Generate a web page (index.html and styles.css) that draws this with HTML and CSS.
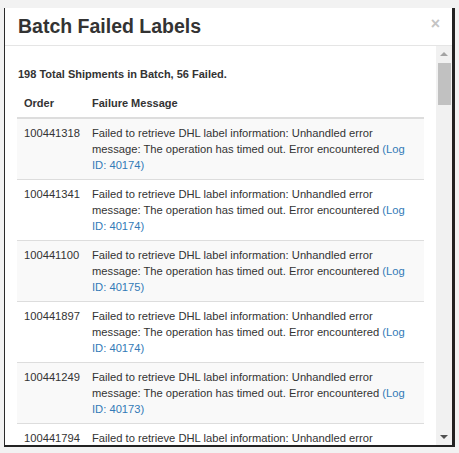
FILE: index.html
```html
<!DOCTYPE html>
<html lang="en">
<head>
<meta charset="utf-8">
<title>Batch Failed Labels</title>
<link rel="stylesheet" href="styles.css">
</head>
<body>
<div class="modal">
  <div class="modal-header">
    <h3 class="modal-title">Batch Failed Labels</h3>
    <span class="close">&times;</span>
  </div>
  <div class="modal-main">
    <div class="modal-body">
      <p class="summary">198 Total Shipments in Batch, 56 Failed.</p>
      <table class="table">
        <thead>
          <tr><th class="col-order">Order</th><th>Failure Message</th></tr>
        </thead>
        <tbody>
          <tr><td>100441318</td><td>Failed to retrieve DHL label information: Unhandled error message: The operation has timed out. Error encountered <a class="log">(Log ID: 40174)</a></td></tr>
          <tr><td>100441341</td><td>Failed to retrieve DHL label information: Unhandled error message: The operation has timed out. Error encountered <a class="log">(Log ID: 40174)</a></td></tr>
          <tr><td>100441100</td><td>Failed to retrieve DHL label information: Unhandled error message: The operation has timed out. Error encountered <a class="log">(Log ID: 40175)</a></td></tr>
          <tr><td>100441897</td><td>Failed to retrieve DHL label information: Unhandled error message: The operation has timed out. Error encountered <a class="log">(Log ID: 40174)</a></td></tr>
          <tr><td>100441249</td><td>Failed to retrieve DHL label information: Unhandled error message: The operation has timed out. Error encountered <a class="log">(Log ID: 40173)</a></td></tr>
          <tr><td>100441794</td><td>Failed to retrieve DHL label information: Unhandled error message: The operation has timed out. Error encountered <a class="log">(Log ID: 40174)</a></td></tr>
        </tbody>
      </table>
    </div>
    <div class="scrollbar">
      <div class="sb-btn"><span class="arrow-up"></span></div>
      <div class="sb-thumb"></div>
      <div class="sb-track"></div>
      <div class="sb-btn"><span class="arrow-down"></span></div>
    </div>
  </div>
</div>
</body>
</html>
```

FILE: styles.css
```css
html, body {
  margin: 0;
  padding: 0;
}
body {
  background: #f2f2f2;
  font-family: "Liberation Sans", Arial, Helvetica, sans-serif;
  color: #333;
  font-size: 11px;
  line-height: 16px;
  padding: 8px 4px 0 4px;
  height: 453px;
  box-sizing: border-box;
  overflow: hidden;
}
.modal {
  background: #fff;
  border-left: 1px solid #2a2a2a;
  border-right: 3px solid #222;
  border-bottom: 2px solid #222;
  height: 439px;
  box-sizing: border-box;
  display: flex;
  flex-direction: column;
}
.modal-header {
  height: 38px;
  box-sizing: border-box;
  border-bottom: 1px solid #e5e5e5;
  padding: 7px 12px 0 13px;
  display: flex;
  justify-content: space-between;
  align-items: flex-start;
  flex: none;
}
.modal-title {
  margin: 0;
  font-size: 19.5px;
  line-height: 22px;
  font-weight: bold;
  color: #333;
}
.close {
  font-size: 16px;
  font-weight: bold;
  line-height: 16px;
  color: #c4c4c4;
  margin-top: 1px;
}
.modal-main {
  flex: 1;
  display: flex;
  min-height: 0;
}
.modal-body {
  flex: 1;
  overflow: hidden;
  padding: 0 12px;
}
.summary {
  margin: 20px 0 5px 1px;
  font-weight: bold;
}
.table {
  width: 100%;
  border-collapse: collapse;
  border-spacing: 0;
}
.table th {
  text-align: left;
  font-weight: bold;
  padding: 8px 7px 6px;
  border-bottom: 2px solid #ddd;
  vertical-align: bottom;
}
.table th.col-order {
  width: 56px;
  padding-right: 5px;
}
.table td {
  padding: 6px 7px;
  vertical-align: top;
  border-top: 1px solid #ddd;
  font-size: 11.2px;
}
.table td:first-child {
  padding-right: 5px;
}
.table tbody tr:first-child td {
  border-top: 0;
}
.table tbody tr:nth-child(odd) td {
  background: #f9f9f9;
}
.log {
  color: #337ab7;
  text-decoration: none;
}
.scrollbar {
  width: 16px;
  flex: none;
  background: #f1f1f1;
  display: flex;
  flex-direction: column;
}
.sb-btn {
  height: 16px;
  flex: none;
  display: flex;
  align-items: center;
  justify-content: center;
}
.arrow-up {
  width: 0;
  height: 0;
  border-left: 4px solid transparent;
  border-right: 4px solid transparent;
  border-bottom: 4px solid #a3a3a3;
}
.arrow-down {
  width: 0;
  height: 0;
  border-left: 4px solid transparent;
  border-right: 4px solid transparent;
  border-top: 4px solid #505050;
}
.sb-thumb {
  height: 42px;
  margin: 1px 1px 0 2px;
  background: #c1c1c1;
  flex: none;
}
.sb-track {
  flex: 1;
}
```
